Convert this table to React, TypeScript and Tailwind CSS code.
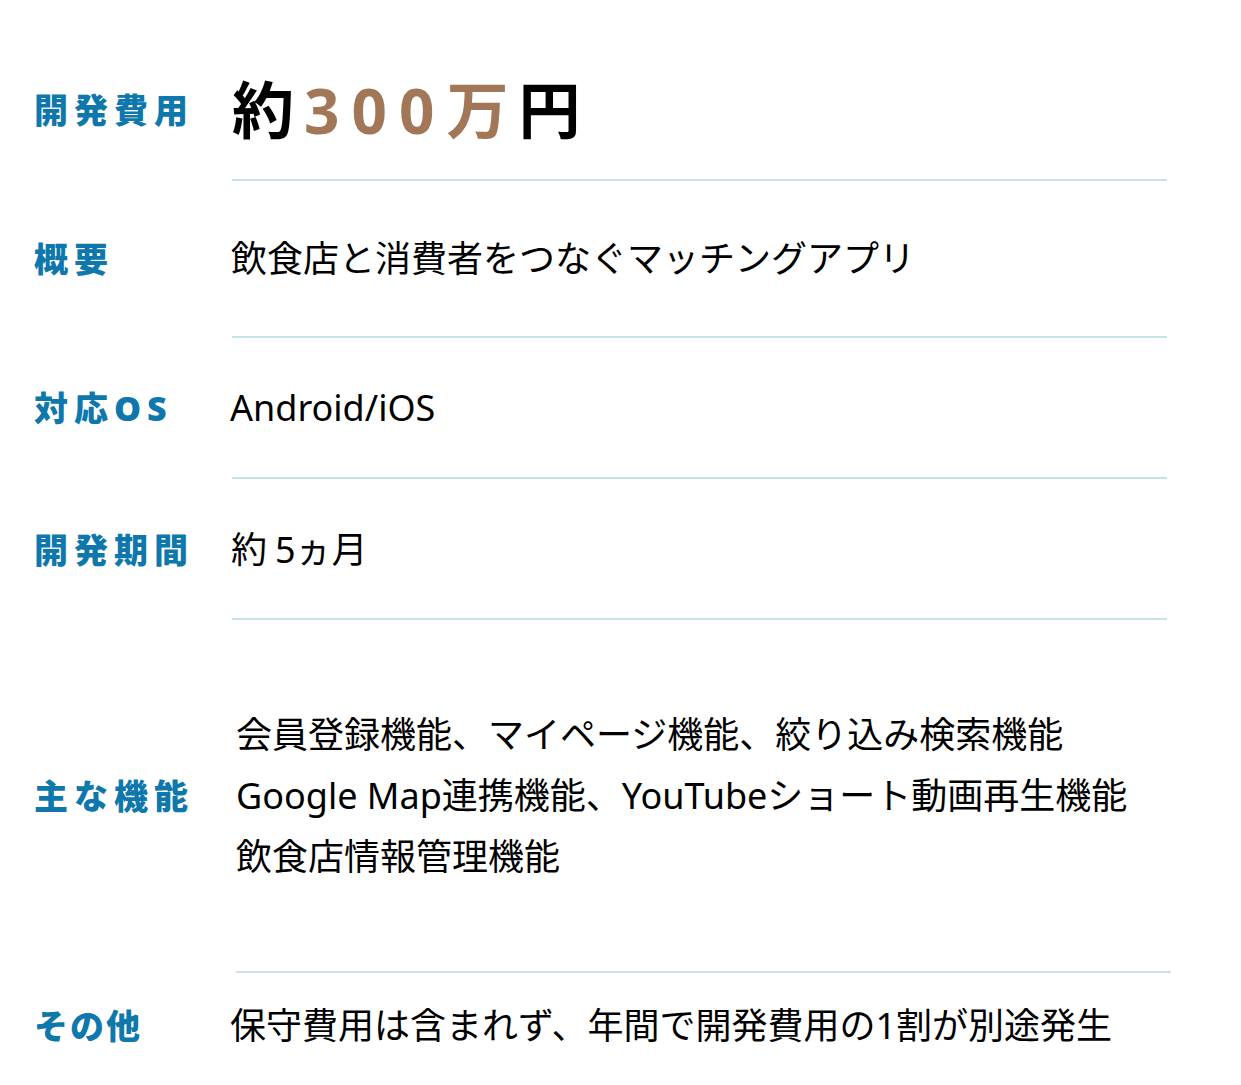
import React from "react";

const font = "font-['Noto_Sans','Noto_Sans_CJK_JP',sans-serif]";

const Label = ({ text, tight }: { text: string; tight?: boolean }) => (
  <div
    className={`w-[196px] shrink-0 text-[34px] leading-none font-black text-[#0e77ac] ${
      tight ? "tracking-[2px]" : "tracking-[6px]"
    }`}
  >
    {text}
  </div>
);

const Line = ({ shift }: { shift?: boolean }) => (
  <div className={`h-[2px] w-[935px] bg-[#c8e3e6] ${shift ? "ml-[236px]" : "ml-[232px]"}`} />
);

const App = () => {
  return (
    <div className={`w-[1241px] h-[1085px] bg-white overflow-hidden text-black ${font}`}>
      <div className="h-[179px] pt-[40px] pl-[34px] flex items-center">
        <Label text="開発費用" />
        <div className="text-[62px] leading-none font-bold tracking-[10px] pl-[2px]">
          約<span className="text-[#a27758] tracking-[12px]">300</span>
          <span className="text-[#a27758]">万</span>円
        </div>
      </div>
      <Line />
      <div className="h-[155px] pl-[34px] flex items-center">
        <Label text="概要" />
        <div className="text-[36px] leading-none pl-[1px]">飲食店と消費者をつなぐマッチングアプリ</div>
      </div>
      <Line />
      <div className="h-[139px] pl-[34px] flex items-center">
        <Label text="対応OS" />
        <div className="text-[36px] leading-none">Android/iOS</div>
      </div>
      <Line />
      <div className="h-[139px] pt-[2px] pl-[34px] flex items-center">
        <Label text="開発期間" />
        <div className="text-[36px] leading-none pl-[1px]">
          約<span className="ml-[8px]">5ヵ月</span>
        </div>
      </div>
      <Line />
      <div className="h-[351px] pl-[34px] flex items-center">
        <Label text="主な機能" />
        <div className="pl-[6px] text-[36px] leading-[61px]">
          <div>会員登録機能、マイページ機能、絞り込み検索機能</div>
          <div>Google Map連携機能、YouTubeショート動画再生機能</div>
          <div>飲食店情報管理機能</div>
        </div>
      </div>
      <Line shift />
      <div className="h-[106px] pl-[34px] flex items-center">
        <Label text="その他" tight />
        <div className="text-[36px] leading-none">保守費用は含まれず、年間で開発費用の1割が別途発生</div>
      </div>
    </div>
  );
};

export default App;
